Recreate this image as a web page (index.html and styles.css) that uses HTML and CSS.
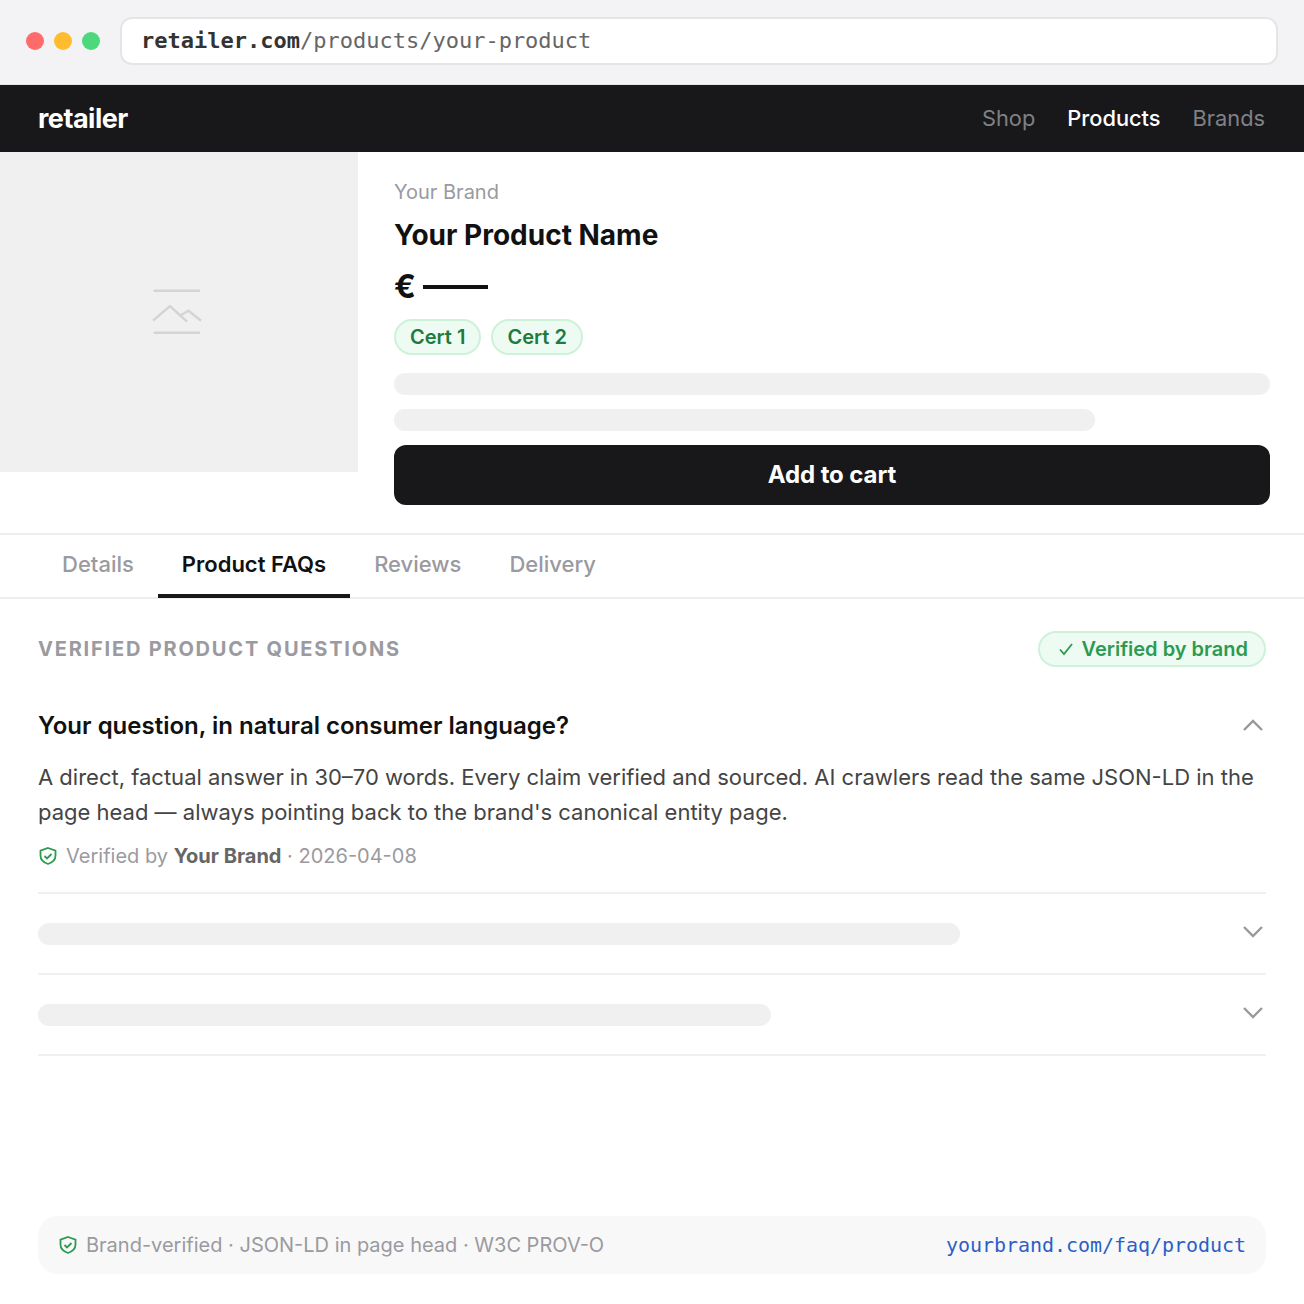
FILE: index.html
```html
<!DOCTYPE html>
<html lang="en">
<head>
    <meta charset="UTF-8">
    <title>Product FAQs</title>
    <link rel="stylesheet" href="styles.css">
</head>
<body>
    <div class="chrome">
        <span class="dot dot-red"></span>
        <span class="dot dot-yellow"></span>
        <span class="dot dot-green"></span>
        <div class="url"><b>retailer.com</b>/products/your-product</div>
    </div>

    <nav class="nav">
        <span class="logo">retailer</span>
        <div class="nav-links">
            <span>Shop</span>
            <span class="active">Products</span>
            <span>Brands</span>
        </div>
    </nav>

    <section class="product">
        <div class="image">
            <svg class="image-icon" width="52" height="48" viewBox="0 0 52 48" fill="none" stroke="#d4d4d4" stroke-width="2.4">
                <path d="M2.600 2.700h46.400"/>
                <path d="M2.600 44.700h46.400"/>
                <path d="M2 32.700l17-14.700 17 15.700"/>
                <path d="M30 27l7.600-4.300 12.400 10"/>
            </svg>
        </div>
        <div class="info">
            <div class="brand">Your Brand</div>
            <h1 class="name">Your Product Name</h1>
            <div class="price">€ <span class="price-line"></span></div>
            <div class="certs">
                <span class="cert">Cert 1</span>
                <span class="cert">Cert 2</span>
            </div>
            <div class="bar bar-full"></div>
            <div class="bar bar-short"></div>
            <button class="cart">Add to cart</button>
        </div>
    </section>

    <div class="tabs">
        <span class="tab">Details</span>
        <span class="tab tab-active">Product FAQs</span>
        <span class="tab">Reviews</span>
        <span class="tab">Delivery</span>
    </div>

    <main class="faq">
        <div class="faq-head">
            <span class="faq-title">VERIFIED PRODUCT QUESTIONS</span>
            <span class="verified">
                <svg width="16" height="14" viewBox="0 0 16 14" fill="none" stroke="#2d9a50" stroke-width="1.8"><path d="M2 7.500l4 4.500 8-10"/></svg>
                Verified by brand
            </span>
        </div>

        <div class="item item-open">
            <div class="question">
                <span>Your question, in natural consumer language?</span>
                <svg class="chev chev-up" width="22" height="14" viewBox="0 0 22 14" fill="none" stroke="#999" stroke-width="2.4"><path d="M2 12l9-9 9 9"/></svg>
            </div>
            <p class="answer">A direct, factual answer in 30–70 words. Every claim verified and sourced. AI crawlers read the same JSON-LD in the page head — always pointing back to the brand's canonical entity page.</p>
            <div class="byline">
                <svg width="20" height="20" viewBox="0 0 20 20" fill="none" stroke="#2d9a50" stroke-width="1.8"><path d="M10 2l7.500 2.600v5c0 4.200-3 7-7.500 8.400-4.500-1.400-7.500-4.200-7.500-8.400v-5z"/><path d="M6.500 10l2.500 2.500 4.500-4.500"/></svg>
                <span>Verified by <b>Your Brand</b> · 2026-04-08</span>
            </div>
        </div>

        <div class="item item-closed">
            <div class="bar bar-q1"></div>
            <svg class="chev" width="22" height="14" viewBox="0 0 22 14" fill="none" stroke="#999" stroke-width="2.4"><path d="M2 2l9 9 9-9"/></svg>
        </div>
        <div class="item item-closed">
            <div class="bar bar-q2"></div>
            <svg class="chev" width="22" height="14" viewBox="0 0 22 14" fill="none" stroke="#999" stroke-width="2.4"><path d="M2 2l9 9 9-9"/></svg>
        </div>
    </main>

    <footer class="foot">
        <div class="foot-left">
            <svg width="20" height="20" viewBox="0 0 20 20" fill="none" stroke="#2d9a50" stroke-width="1.8"><path d="M10 2l7.500 2.600v5c0 4.200-3 7-7.500 8.400-4.500-1.400-7.500-4.200-7.500-8.400v-5z"/><path d="M6.500 10l2.500 2.500 4.500-4.500"/></svg>
            <span>Brand-verified · JSON-LD in page head · W3C PROV-O</span>
        </div>
        <span class="foot-link">yourbrand.com/faq/product</span>
    </footer>
</body>
</html>
```

FILE: styles.css
```css
* {
    box-sizing: border-box;
}
body {
    margin: 0;
    height: 1304px;
    background-color: #fff;
    font-family: Inter, "Liberation Sans", sans-serif;
    color: #111;
    overflow: hidden;
}
.chrome {
    display: flex;
    align-items: center;
    height: 85px;
    padding: 0 26px 3px;
    gap: 10px;
    background-color: #f3f3f6;
    border-bottom: 1px solid #e5e5e8;
}
.dot {
    width: 18px;
    height: 18px;
    border-radius: 50%;
}
.dot-red {
    background-color: #ff6b6b;
}
.dot-yellow {
    background-color: #ffbd2e;
}
.dot-green {
    background-color: #4cd97b;
}
.url {
    flex: 1;
    height: 48px;
    margin-left: 10px;
    padding: 0 19px;
    display: flex;
    align-items: center;
    background-color: #fff;
    border: 2px solid #e5e5e8;
    border-radius: 12px;
    font-family: "DejaVu Sans Mono", monospace;
    font-size: 22px;
    color: #666;
}
.url b {
    font-weight: 700;
    color: #333;
}
.nav {
    display: flex;
    align-items: center;
    justify-content: space-between;
    height: 67px;
    padding: 0 38px;
    background-color: #18181b;
}
.logo {
    font-size: 27px;
    font-weight: 700;
    letter-spacing: -0.5px;
    color: #fff;
}
.nav-links {
    display: flex;
    gap: 32px;
    padding-right: 1px;
    padding-bottom: 1px;
    font-size: 21.8px;
    color: #808085;
}
.nav-links .active {
    color: #fff;
    font-weight: 500;
}
.product {
    display: flex;
    height: 383px;
    border-bottom: 2px solid #eee;
}
.image {
    display: flex;
    align-items: center;
    justify-content: center;
    width: 358px;
    height: 320px;
    background-color: #f0f0f0;
}
.image-icon {
    margin-right: 4px;
}
.info {
    flex: 1;
    padding: 28px 34px 0 36px;
}
.brand {
    font-size: 20px;
    line-height: 24px;
    color: #9a9aa0;
}
.name {
    margin: 14px 0 0;
    font-size: 28px;
    line-height: 35px;
    font-weight: 700;
}
.price {
    display: flex;
    align-items: center;
    gap: 7px;
    margin-top: 14px;
    height: 38px;
    font-size: 32px;
    font-weight: 700;
}
.price-line {
    width: 65px;
    height: 4px;
    margin-top: 2px;
    background-color: #111;
}
.certs {
    display: flex;
    gap: 10px;
    margin-top: 14px;
}
.cert {
    height: 36px;
    padding: 0 14px;
    display: flex;
    align-items: center;
    font-size: 20px;
    font-weight: 600;
    color: #1f7a3d;
    background-color: #edfbf2;
    border: 2px solid #cdf2da;
    border-radius: 18px;
}
.bar {
    height: 22px;
    background-color: #f0f0f0;
    border-radius: 11px;
}
.bar-full {
    margin-top: 18px;
}
.bar-short {
    margin-top: 14px;
    width: 80%;
}
.cart {
    display: block;
    width: 100%;
    height: 60px;
    margin-top: 14px;
    padding-bottom: 2px;
    border: none;
    border-radius: 12px;
    background-color: #18181b;
    color: #fff;
    font-family: inherit;
    font-size: 24px;
    font-weight: 700;
    letter-spacing: -0.1px;
}
.tabs {
    display: flex;
    height: 64px;
    padding: 0 38px;
    gap: 0;
    border-bottom: 2px solid #eee;
}
.tab {
    display: flex;
    align-items: center;
    height: 63px;
    padding: 0 24px 2px;
    font-size: 22px;
    font-weight: 500;
    color: #9a9aa0;
    border-bottom: 4px solid transparent;
}
.tab-active {
    color: #111;
    font-weight: 600;
    border-bottom-color: #18181b;
}
.faq {
    padding: 32px 38px 0;
}
.faq-head {
    display: flex;
    align-items: center;
    justify-content: space-between;
    height: 36px;
}
.faq-title {
    font-size: 20px;
    font-weight: 700;
    letter-spacing: 1.8px;
    color: #9a9aa0;
}
.verified {
    display: flex;
    align-items: center;
    gap: 8px;
    height: 36px;
    padding: 0 16px 0 18px;
    font-size: 20px;
    font-weight: 600;
    color: #2d9a50;
    background-color: #edfbf2;
    border: 2px solid #cdf2da;
    border-radius: 18px;
}
.item {
    border-bottom: 2px solid #f0f0f0;
}
.item-open {
    padding-top: 40px;
    height: 227px;
}
.item-closed {
    display: flex;
    align-items: center;
    justify-content: space-between;
    height: 81px;
}
.chev {
    margin-right: 2px;
    position: relative;
    top: -2px;
}
.chev-up {
    top: 0;
}
.question {
    display: flex;
    align-items: center;
    justify-content: space-between;
    height: 36px;
    font-size: 24px;
    font-weight: 600;
}
.answer {
    margin: 17px 0 0;
    font-size: 22px;
    line-height: 35px;
    color: #444;
}
.byline {
    display: flex;
    align-items: center;
    gap: 8px;
    margin-top: 14px;
    font-size: 20px;
    color: #9a9aa0;
}
.byline b {
    font-weight: 700;
    color: #666;
}
.bar-q1 {
    width: 922px;
}
.bar-q2 {
    width: 733px;
}
.foot {
    display: flex;
    align-items: center;
    justify-content: space-between;
    margin: 160px 38px 0;
    height: 58px;
    padding: 0 20px;
    background-color: #f8f8f9;
    border-radius: 20px;
}
.foot-left {
    display: flex;
    align-items: center;
    gap: 8px;
    font-size: 20px;
    color: #9a9aa0;
}
.foot-link {
    font-family: "DejaVu Sans Mono", monospace;
    font-size: 20px;
    letter-spacing: -0.04px;
    color: #2b5fc7;
}
```
